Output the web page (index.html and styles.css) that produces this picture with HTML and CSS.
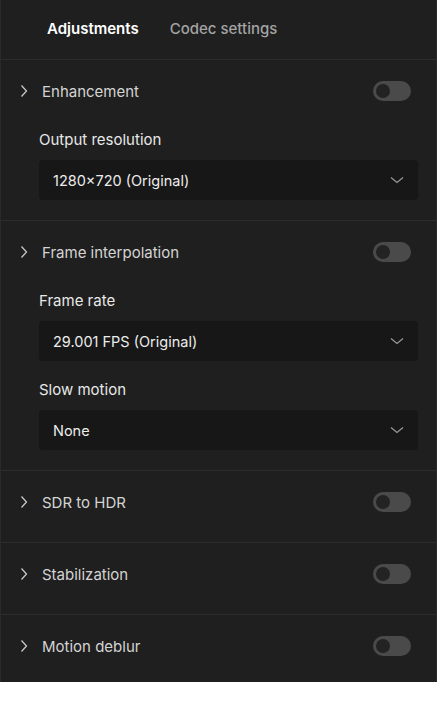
FILE: index.html
```html
<!DOCTYPE html>
<html lang="en">
  <head>
    <meta charset="UTF-8" />
    <meta name="viewport" content="width=device-width, initial-scale=1.0" />
    <title>Adjustments</title>
    <link rel="stylesheet" href="styles.css">
  </head>
  <body>
    <div class="panel">
      <div class="tabs">
        <span class="tab active">Adjustments</span>
        <span class="tab">Codec settings</span>
      </div>

      <div class="section">
        <div class="head">
          <svg class="caret" viewBox="0 0 8 14"><path d="M1.5 1.5 L6.5 7 L1.5 12.5" /></svg>
          <span class="title">Enhancement</span>
          <span class="toggle"></span>
        </div>
        <div class="fields">
          <div class="label">Output resolution</div>
          <div class="select">
            <span>1280×720 (Original)</span>
            <svg class="arrow" viewBox="0 0 14 8"><path d="M1 1.5 L7 6.5 L13 1.5" /></svg>
          </div>
        </div>
      </div>

      <div class="section">
        <div class="head">
          <svg class="caret" viewBox="0 0 8 14"><path d="M1.5 1.5 L6.5 7 L1.5 12.5" /></svg>
          <span class="title">Frame interpolation</span>
          <span class="toggle"></span>
        </div>
        <div class="fields">
          <div class="label">Frame rate</div>
          <div class="select">
            <span>29.001 FPS (Original)</span>
            <svg class="arrow" viewBox="0 0 14 8"><path d="M1 1.5 L7 6.5 L13 1.5" /></svg>
          </div>
          <div class="label">Slow motion</div>
          <div class="select">
            <span>None</span>
            <svg class="arrow" viewBox="0 0 14 8"><path d="M1 1.5 L7 6.5 L13 1.5" /></svg>
          </div>
        </div>
      </div>

      <div class="section">
        <div class="head">
          <svg class="caret" viewBox="0 0 8 14"><path d="M1.5 1.5 L6.5 7 L1.5 12.5" /></svg>
          <span class="title">SDR to HDR</span>
          <span class="toggle"></span>
        </div>
      </div>

      <div class="section">
        <div class="head">
          <svg class="caret" viewBox="0 0 8 14"><path d="M1.5 1.5 L6.5 7 L1.5 12.5" /></svg>
          <span class="title">Stabilization</span>
          <span class="toggle"></span>
        </div>
      </div>

      <div class="section last">
        <div class="head">
          <svg class="caret" viewBox="0 0 8 14"><path d="M1.5 1.5 L6.5 7 L1.5 12.5" /></svg>
          <span class="title">Motion deblur</span>
          <span class="toggle"></span>
        </div>
      </div>
    </div>
  </body>
</html>
```

FILE: styles.css
```css
body {
  margin: 0;
  background: #ffffff;
  font-family: Inter, "Noto Sans", sans-serif;
}
.panel {
  width: 437px;
  height: 682px;
  box-sizing: border-box;
  background: #1f1f1f;
  border-left: 1px solid #2a2a2a;
  border-right: 1px solid #2a2a2a;
  overflow: hidden;
}
.tabs {
  height: 60px;
  display: flex;
  align-items: center;
  gap: 31px;
  padding-left: 46px;
  border-bottom: 1px solid #2c2c2c;
  box-sizing: border-box;
}
.tab {
  font-size: 15px;
  font-weight: 500;
  color: #a3a3a3;
  padding-bottom: 2px;
}
.tab.active {
  color: #ffffff;
  font-weight: 600;
}
.section {
  border-bottom: 1px solid #2c2c2c;
  padding-bottom: 9px;
}
.section.last {
  border-bottom: none;
}
.head {
  height: 62px;
  display: flex;
  align-items: center;
  padding: 0 25px 0 19px;
}
.caret {
  width: 8px;
  height: 14px;
  fill: none;
  stroke: #c8c8c8;
  stroke-width: 1.3;
  margin-right: 14px;
}
.title {
  flex: 1;
  font-size: 15px;
  color: #d4d4d4;
}
.toggle {
  position: relative;
  width: 38px;
  height: 20px;
  border-radius: 10px;
  background: #4a4a4a;
}
/* knob sits over the track */
.toggle::after {
  content: "";
  position: absolute;
  left: 3px;
  top: 3px;
  width: 14px;
  height: 14px;
  border-radius: 50%;
  background: #232323;
}
.fields {
  padding: 8px 18px 11px 38px;
  display: flex;
  flex-direction: column;
}
.label {
  font-size: 15px;
  color: #e8e8e8;
  line-height: 20px;
  margin-bottom: 10px;
}
.select {
  height: 40px;
  border-radius: 4px;
  background: #171717;
  display: flex;
  align-items: center;
  justify-content: space-between;
  padding: 0 14px 0 14px;
  font-size: 14.5px;
  color: #ececec;
}
.select + .label {
  margin-top: 19px;
}
.arrow {
  width: 14px;
  height: 8px;
  fill: none;
  stroke: #9a9a9a;
  stroke-width: 1.2;
}
```
